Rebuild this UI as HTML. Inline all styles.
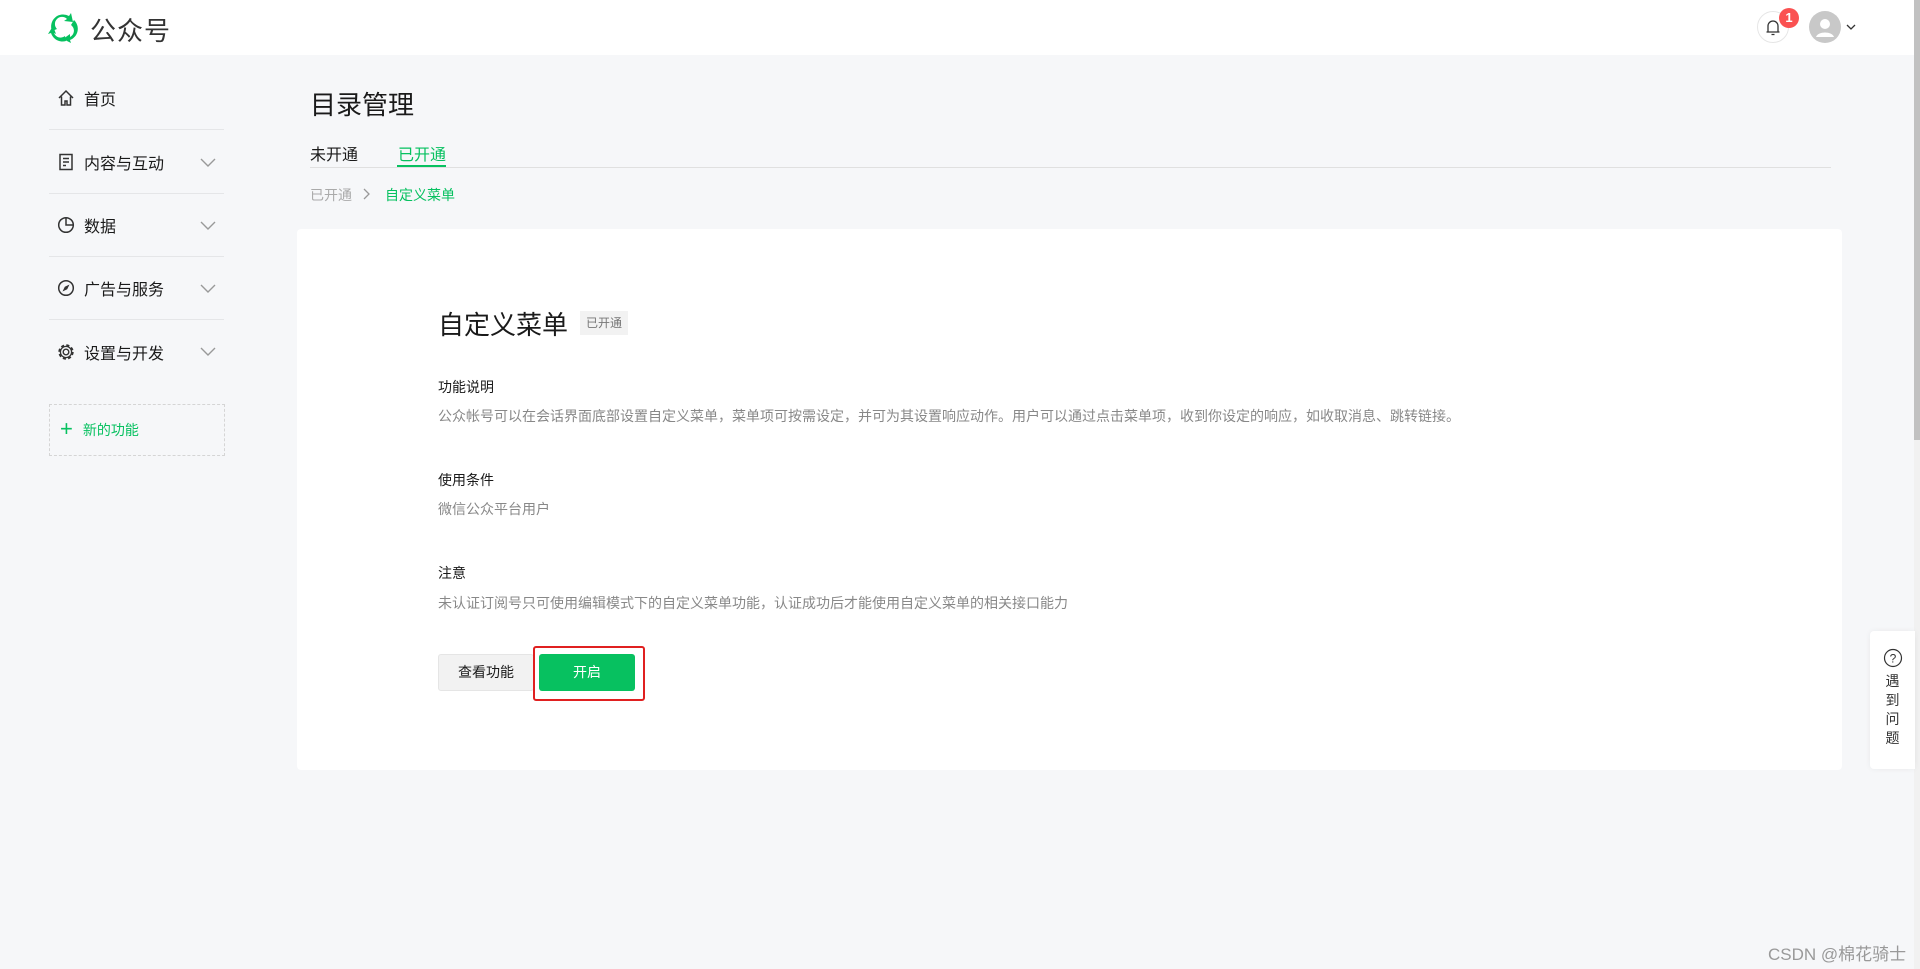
<!DOCTYPE html>
<html><head><meta charset="utf-8"><style>
*{margin:0;padding:0;box-sizing:border-box}
body{width:1920px;height:969px;overflow:hidden;background:#f6f7f9;font-family:"Liberation Sans","Noto Sans CJK SC",sans-serif;color:#1a1a1a;position:relative}
.abs{position:absolute}
.hdr{left:0;top:0;width:1914px;height:55px;background:#fff}
.scroll{left:1914px;top:0;width:6px;height:969px;background:#f1f1f1}
.thumb{left:1914px;top:0;width:6px;height:440px;background:#c1c1c1}
.nav{left:49px;width:175px;height:63px;border-bottom:1px solid #e5e6e8;font-size:16px;display:flex;align-items:center}
.nav svg{margin-left:8px;margin-right:9px}
.nav svg.chev{position:absolute;right:8px;top:27px;margin:0}
.t14{font-size:14px}
</style></head><body>
<div class="abs hdr"></div>
<svg class="abs" style="left:47px;top:11px" width="34" height="34" viewBox="0 0 34 34">
<path d="M5 20A12 12 0 0 1 22 5l2-3 2 9-9-1 3-2A7 7 0 0 0 10 18z" fill="#07c160"/>
<path d="M27 9A12 12 0 0 1 23 29l1 3-8-4 7-5 0 3A7 7 0 0 0 24 14z" fill="#07c160"/>
<path d="M19 30A12 12 0 0 1 4 22l-3 1 5-8 3 8-2-1A7 7 0 0 0 18 25z" fill="#07c160"/>
</svg>
<div class="abs" style="left:90px;top:11px;font-size:26px;color:#333;letter-spacing:1px">公众号</div>
<svg class="abs" style="left:1757px;top:11px" width="32" height="32"><circle cx="16" cy="16" r="15.5" fill="#fff" stroke="#e6e6e6"/><path d="M11 21V15a5 5 0 0 1 10 0v6h1.5M9.5 21h13M14.5 23.5h3" fill="none" stroke="#333" stroke-width="1.3"/></svg>
<div class="abs" style="left:1779px;top:8px;width:20px;height:20px;border-radius:50%;background:#fa5151;color:#fff;font-size:13px;font-weight:bold;text-align:center;line-height:20px">1</div>
<svg class="abs" style="left:1809px;top:11px" width="32" height="32"><circle cx="16" cy="16" r="16" fill="#c8c8c8"/><circle cx="16" cy="13" r="5" fill="#fff"/><path d="M7 26c2-6 16-6 18 0z" fill="#fff"/></svg>
<svg class="abs" style="left:1846px;top:24px" width="10" height="7"><path d="M1 1l4 4 4-4" fill="none" stroke="#333" stroke-width="1.3"/></svg>
<div class="abs scroll"></div><div class="abs thumb"></div>

<div class="abs nav" style="top:67px;"><svg width="18" height="18"><path d="M2 9L9 2l7 7M4.5 7.5V16h3.5v-4h2v4h3.5V7.5" fill="none" stroke="#333" stroke-width="1.5"/></svg>首页</div>
<div class="abs nav" style="top:131px;"><svg width="18" height="18"><rect x="3" y="1.5" width="12" height="15" fill="none" stroke="#333" stroke-width="1.5"/><path d="M6 5.5h6M6 9h6M6 12.5h3" stroke="#333" stroke-width="1.4"/></svg>内容与互动<svg class="chev" width="16" height="10"><path d="M1 1l7 7 7-7" fill="none" stroke="#999" stroke-width="1.4"/></svg></div>
<div class="abs nav" style="top:194px;"><svg width="18" height="18"><circle cx="9" cy="9" r="7.3" fill="none" stroke="#333" stroke-width="1.5"/><path d="M9 2v7h7" fill="none" stroke="#333" stroke-width="1.5"/></svg>数据<svg class="chev" width="16" height="10"><path d="M1 1l7 7 7-7" fill="none" stroke="#999" stroke-width="1.4"/></svg></div>
<div class="abs nav" style="top:257px;"><svg width="18" height="18"><circle cx="9" cy="9" r="7.3" fill="none" stroke="#333" stroke-width="1.5"/><path d="M12.5 5.5L10.2 10.2 5.5 12.5 7.8 7.8z" fill="#333"/></svg>广告与服务<svg class="chev" width="16" height="10"><path d="M1 1l7 7 7-7" fill="none" stroke="#999" stroke-width="1.4"/></svg></div>
<div class="abs nav" style="top:320px;border-bottom:none"><svg width="18" height="18"><circle cx="9" cy="9" r="2.8" fill="none" stroke="#333" stroke-width="1.4"/><circle cx="9" cy="9" r="6.6" fill="none" stroke="#333" stroke-width="2.2" stroke-dasharray="3 2.2"/><circle cx="9" cy="9" r="5.6" fill="none" stroke="#333" stroke-width="1.3"/></svg>设置与开发<svg class="chev" width="16" height="10"><path d="M1 1l7 7 7-7" fill="none" stroke="#999" stroke-width="1.4"/></svg></div>
<div class="abs" style="left:49px;top:404px;width:176px;height:52px;border:1px dashed #d5d5d5;font-size:14px;color:#07c160;display:flex;align-items:center"><span style="font-size:22px;margin:0 10px 2px 10px;font-weight:300">+</span>新的功能</div>

<div class="abs" style="left:310px;top:85px;font-size:26px">目录管理</div>
<div class="abs" style="left:310px;top:141px;font-size:16px">未开通</div>
<div class="abs" style="left:398px;top:141px;font-size:16px;color:#07c160">已开通</div>
<div class="abs" style="left:310px;top:167px;width:1521px;height:1px;background:#e0e0e0"></div>
<div class="abs" style="left:397px;top:165px;width:49px;height:2px;background:#07c160"></div>
<div class="abs t14" style="left:310px;top:185px;color:#aaa">已开通</div>
<svg class="abs" style="left:363px;top:188px" width="8" height="12"><path d="M1 1l5 5-5 5" fill="none" stroke="#999" stroke-width="1.3"/></svg>
<div class="abs t14" style="left:385px;top:185px;color:#07c160">自定义菜单</div>

<div class="abs" style="left:297px;top:229px;width:1545px;height:541px;background:#fff;border-radius:4px"></div>
<div class="abs" style="left:438px;top:305px;font-size:26px">自定义菜单</div>
<div class="abs" style="left:580px;top:311px;width:48px;height:24px;background:#f2f2f2;color:#777;font-size:12px;text-align:center;line-height:24px">已开通</div>
<div class="abs t14" style="left:438px;top:377px">功能说明</div>
<div class="abs t14" style="left:438px;top:406px;color:#888">公众帐号可以在会话界面底部设置自定义菜单，菜单项可按需设定，并可为其设置响应动作。用户可以通过点击菜单项，收到你设定的响应，如收取消息、跳转链接。</div>
<div class="abs t14" style="left:438px;top:470px">使用条件</div>
<div class="abs t14" style="left:438px;top:499px;color:#888">微信公众平台用户</div>
<div class="abs t14" style="left:438px;top:563px">注意</div>
<div class="abs t14" style="left:438px;top:593px;color:#888">未认证订阅号只可使用编辑模式下的自定义菜单功能，认证成功后才能使用自定义菜单的相关接口能力</div>
<div class="abs t14" style="left:438px;top:654px;width:96px;height:37px;background:#f2f2f2;border:1px solid #e5e5e5;border-radius:3px;text-align:center;line-height:35px">查看功能</div>
<div class="abs t14" style="left:539px;top:654px;width:96px;height:37px;background:#07c160;color:#fff;border-radius:3px;text-align:center;line-height:37px">开启</div>
<div class="abs" style="left:533px;top:646px;width:112px;height:55px;border:2px solid #e02020;border-radius:3px"></div>

<div class="abs" style="left:1870px;top:631px;width:45px;height:138px;background:#fff;border-radius:4px 0 0 4px;box-shadow:0 0 6px rgba(0,0,0,.06);font-size:14px;color:#333;text-align:center;line-height:19px;padding-top:17px">
<svg width="20" height="20" style="display:block;margin:0 auto 4px"><circle cx="10" cy="10" r="8.5" fill="none" stroke="#333" stroke-width="1.2"/><text x="10" y="14.5" font-size="12" text-anchor="middle" fill="#333" font-family="Liberation Sans">?</text></svg>遇<br>到<br>问<br>题</div>
<div class="abs" style="left:1768px;top:940px;font-size:17px;color:#999">CSDN @棉花骑士</div>
</body></html>
